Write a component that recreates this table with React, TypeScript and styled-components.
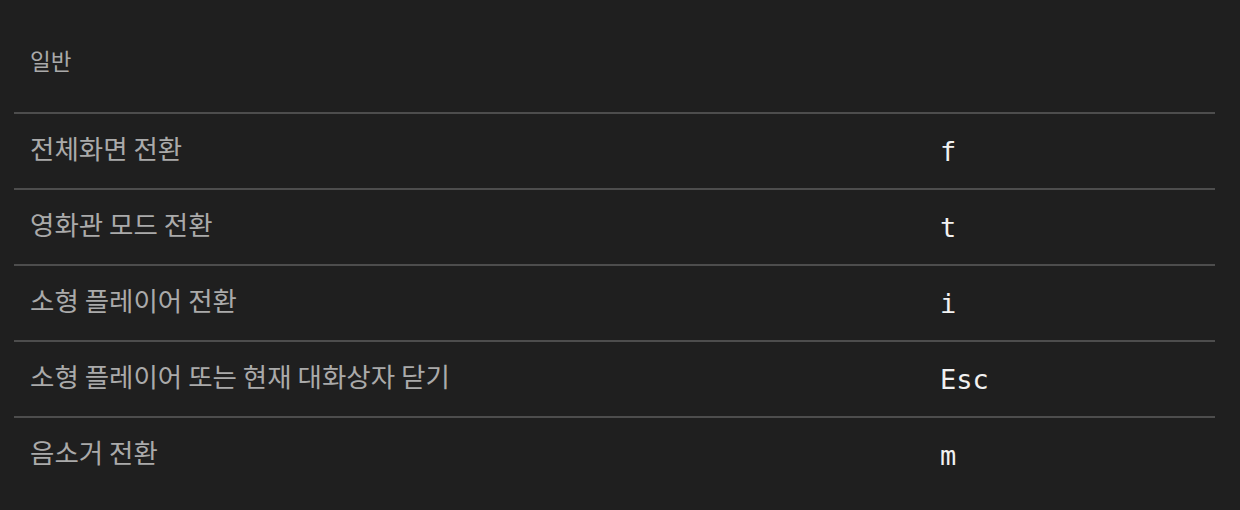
import styled, { createGlobalStyle } from "styled-components";

const GlobalStyle = createGlobalStyle`
  html, body {
    margin: 0;
    padding: 0;
    background: #1f1f1f;
  }
`;

const Page = styled.div`
  width: 1240px;
  height: 510px;
  background: #1f1f1f;
  padding: 0 25px 0 14px;
  box-sizing: border-box;
  font-family: "Noto Sans CJK KR", "Noto Sans", sans-serif;
  overflow: hidden;
`;

const SectionTitle = styled.div`
  height: 112px;
  display: flex;
  align-items: center;
  padding: 8px 0 0 16px;
  box-sizing: border-box;
  font-size: 22.5px;
  color: #aaaaaa;
`;

const ShortcutRow = styled.div`
  display: grid;
  grid-template-columns: 910px 1fr;
  align-items: center;
  height: 74px;
  padding: 0 16px;
  border-top: 2px solid #4d4d4d;
`;

const Label = styled.span`
  font-size: 26.5px;
  color: #aaaaaa;
  line-height: 1;
  margin-top: -6px;
`;

const KeyName = styled.span`
  font-family: "DejaVu Sans Mono", "Liberation Mono", monospace;
  font-size: 27px;
  color: #f1f1f1;
  line-height: 1;
`;

const shortcuts = [
  { label: "전체화면 전환", key: "f" },
  { label: "영화관 모드 전환", key: "t" },
  { label: "소형 플레이어 전환", key: "i" },
  { label: "소형 플레이어 또는 현재 대화상자 닫기", key: "Esc" },
  { label: "음소거 전환", key: "m" },
];

export default function App() {
  return (
    <>
      <GlobalStyle />
      <Page>
        <SectionTitle>일반</SectionTitle>
        {shortcuts.map((item) => (
          <ShortcutRow key={item.key}>
            <Label>{item.label}</Label>
            <KeyName>{item.key}</KeyName>
          </ShortcutRow>
        ))}
      </Page>
    </>
  );
}
